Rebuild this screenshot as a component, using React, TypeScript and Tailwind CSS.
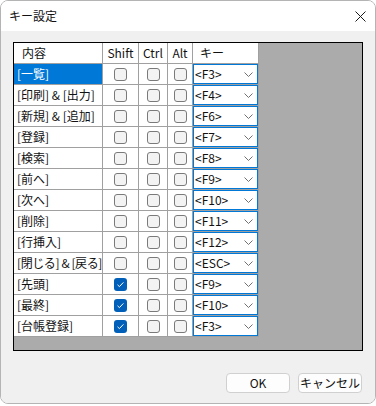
import React from "react";

const rows: { label: string; key: string; shift: boolean }[] = [
  { label: "[一覧]", key: "<F3>", shift: false },
  { label: "[印刷] & [出力]", key: "<F4>", shift: false },
  { label: "[新規] & [追加]", key: "<F6>", shift: false },
  { label: "[登録]", key: "<F7>", shift: false },
  { label: "[検索]", key: "<F8>", shift: false },
  { label: "[前へ]", key: "<F9>", shift: false },
  { label: "[次へ]", key: "<F10>", shift: false },
  { label: "[削除]", key: "<F11>", shift: false },
  { label: "[行挿入]", key: "<F12>", shift: false },
  { label: "[閉じる] & [戻る]", key: "<ESC>", shift: false },
  { label: "[先頭]", key: "<F9>", shift: true },
  { label: "[最終]", key: "<F10>", shift: true },
  { label: "[台帳登録]", key: "<F3>", shift: true },
];

function Check({ on }: { on: boolean }) {
  if (on) {
    return (
      <div className="w-[13px] h-[13px] rounded-[3px] bg-[#005fb8] flex items-center justify-center">
        <svg width="13" height="13" viewBox="0 0 13 13">
          <path d="M3.5 6.8 L5.4 8.6 L9.4 4.4" fill="none" stroke="#ffffff" strokeWidth="1" />
        </svg>
      </div>
    );
  }
  return <div className="w-[13px] h-[13px] rounded-[3px] border border-[#7a7a7a] bg-[#f3f3f3]" />;
}

const cell = "border-r border-b border-[#a0a0a0] h-[21px] flex items-center";

export default function App() {
  return (
    <div
      className="w-[376px] h-[406px] bg-white"
      style={{ fontFamily: '"Noto Sans CJK JP", "Liberation Sans", sans-serif' }}
    >
      <div className="w-[376px] h-[404px] border border-[#b4b4b4] rounded-lg overflow-hidden flex flex-col text-[12px] text-[#111111] leading-none">
        <div className="h-[30px] bg-white flex items-center justify-between pl-[8px] pr-[9px] shrink-0">
          <span className="text-[12px]">キー設定</span>
          <svg width="11" height="11" viewBox="0 0 11 11">
            <path d="M0.5 0.5 L10.5 10.5 M10.5 0.5 L0.5 10.5" stroke="#1a1a1a" strokeWidth="1" />
          </svg>
        </div>
        <div className="flex-1 bg-[#f0f0f0] flex flex-col">
          <div className="ml-[12px] mt-[11px] w-[350px] h-[309px] border border-black bg-[#ababab]">
            <div className="flex flex-col w-fit">
              <div className="flex bg-white">
                <div className={`${cell} w-[89px] pl-[8px]`}>内容</div>
                <div className={`${cell} w-[36px] justify-center`}>Shift</div>
                <div className={`${cell} w-[29px] justify-center`}>Ctrl</div>
                <div className={`${cell} w-[25px] justify-center`}>Alt</div>
                <div className={`${cell} w-[66px] pl-[7px]`}>キー</div>
              </div>
              {rows.map((r, i) => (
                <div key={i} className="flex bg-white">
                  <div
                    className={`${cell} w-[89px] pl-[3px] whitespace-nowrap overflow-hidden ${
                      i === 0 ? "bg-[#0078d7] text-white" : ""
                    } ${i === 9 ? "tracking-[-0.4px]" : ""}`}
                  >
                    {r.label}
                  </div>
                  <div className={`${cell} w-[36px] justify-center pr-[1px]`}>
                    <Check on={r.shift} />
                  </div>
                  <div className={`${cell} w-[29px] justify-center pl-[1px]`}>
                    <Check on={false} />
                  </div>
                  <div className={`${cell} w-[25px] justify-center`}>
                    <Check on={false} />
                  </div>
                  <div className="border-r border-b border-[#a0a0a0] h-[21px] w-[66px]">
                    <div className="h-[20px] w-[65px] border border-[#0078d7] bg-white flex items-center justify-between pl-[1px] pr-[4px]">
                      <span>{r.key}</span>
                      <svg width="9" height="5" viewBox="0 0 9 5">
                        <path d="M0.5 0.5 L4.5 4.5 L8.5 0.5" fill="none" stroke="#707070" strokeWidth="1" />
                      </svg>
                    </div>
                  </div>
                </div>
              ))}
            </div>
          </div>
          <div className="flex justify-end gap-[8px] pr-[13px] mt-[22px]">
            <button className="w-[64px] h-[20px] bg-[#fdfdfd] border border-[#d0d0d0] rounded-[4px] flex items-center justify-center text-[12px]">
              OK
            </button>
            <button className="w-[64px] h-[20px] bg-[#fdfdfd] border border-[#d0d0d0] rounded-[4px] flex items-center justify-center text-[12px]">
              キャンセル
            </button>
          </div>
        </div>
      </div>
    </div>
  );
}
